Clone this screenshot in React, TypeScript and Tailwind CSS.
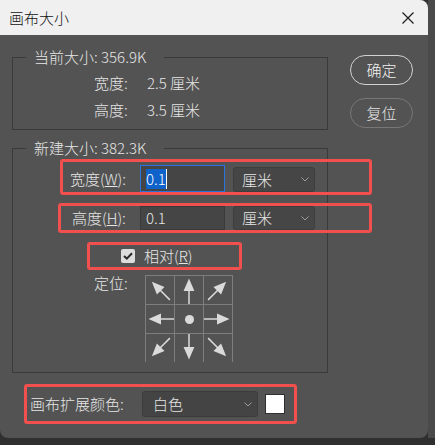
const ANCHORS: (number | null)[] = [-45, 0, 45, -90, null, 90, -135, 180, 135];

function Chevron() {
  return (
    <svg width="8" height="5" viewBox="0 0 8 5" className="shrink-0">
      <path d="M0.5 0.5 L4 4 L7.5 0.5" fill="none" stroke="#9c9c9c" strokeWidth="1" />
    </svg>
  );
}

function Arrow({ angle }: { angle: number }) {
  return (
    <svg width="28" height="28" viewBox="0 0 28 28">
      <g transform={`rotate(${angle} 14 14)`} fill="#dadada">
        <polygon points="14,2.5 8.6,15 19.4,15" />
        <rect x="13.25" y="14" width="1.5" height="14" />
      </g>
    </svg>
  );
}

function AnchorGrid() {
  return (
    <div className="grid grid-cols-[repeat(3,29px)] border-r border-[#7d7d7d]">
      {ANCHORS.map((a, i) => (
        <div key={i} className="flex h-[29px] w-[29px] items-center justify-center border-l border-t border-[#7d7d7d]">
          {a === null ? <span className="h-[9px] w-[9px] rounded-full bg-[#dadada]" /> : <Arrow angle={a} />}
        </div>
      ))}
    </div>
  );
}

export default function App() {
  return (
    <div className="flex h-[445px] w-[435px] bg-[#2f2f2f] font-['Noto_Sans_CJK_SC','Microsoft_YaHei',sans-serif] text-[15px] font-light leading-5 text-[#e6e6e6]">
      <div className="flex h-[438px] w-[428px] flex-col overflow-hidden rounded-b-[8px] rounded-tr-[8px] bg-[#535353]">
        {/* title bar */}
        <div className="flex h-[35px] shrink-0 items-center justify-between bg-[#f0f0f0] pl-[9px] pr-[14px] text-[#111]">
          <span>画布大小</span>
          <svg width="12" height="12" viewBox="0 0 12 12">
            <path d="M0.5 0.5 L11.5 11.5 M11.5 0.5 L0.5 11.5" stroke="#1c1c1c" strokeWidth="1.2" />
          </svg>
        </div>

        <div className="flex pt-3">
          <div className="flex w-[328px] flex-col pl-3">
            <fieldset className="min-w-0 border border-[#3a3a3a] pb-[6px]">
              <legend className="ml-[13px] pl-2 pr-[18px]">当前大小: 356.9K</legend>
              <div className="mt-[2px] pl-[81px]">
                <div className="flex h-[27px] items-center">
                  <span className="w-[53px]">宽度:</span>
                  <span>2.5 厘米</span>
                </div>
                <div className="flex h-[27px] items-center">
                  <span className="w-[53px]">高度:</span>
                  <span>3.5 厘米</span>
                </div>
              </div>
            </fieldset>

            <fieldset className="mt-2 min-w-0 border border-[#3a3a3a] pb-[10px]">
              <legend className="ml-[13px] pl-2 pr-[18px]">新建大小: 382.3K</legend>

              <div className="ml-[47px] mt-px flex h-[36px] w-[312px] items-end rounded-[3px] border-[3px] border-[#f24f4f] pl-[7px]">
                <span className="flex h-[27px] w-[70px] items-center">
                  宽度(<u>W</u>):
                </span>
                <div className="flex h-[27px] w-[85px] items-center border border-[#2a72dc] bg-[#454545] pl-[5px]">
                  <span className="bg-[#0f62c9] leading-[20px] text-white">0.1</span>
                  <span className="h-[20px] w-px bg-white" />
                </div>
                <div className="ml-2 flex h-[25px] w-[82px] items-center justify-between rounded-[3px] border border-[#3d3d3d] bg-[#464646] pl-2 pr-[5px]">
                  <span>厘米</span>
                  <Chevron />
                </div>
              </div>

              <div className="ml-[45px] mt-2 flex h-[30px] w-[314px] items-center rounded-[3px] border-[3px] border-[#f24f4f] pl-[11px]">
                <span className="w-[68px]">
                  高度(<u>H</u>):
                </span>
                <div className="flex h-[24px] w-[85px] items-center border border-[#3a3a3a] bg-[#454545] pl-[5px]">
                  <span>0.1</span>
                </div>
                <div className="ml-2 flex h-[24px] w-[82px] items-center justify-between rounded-[3px] border border-[#3d3d3d] bg-[#464646] pl-2 pr-[5px]">
                  <span>厘米</span>
                  <Chevron />
                </div>
              </div>

              <div className="ml-[74px] mt-[9px] flex h-[28px] w-[155px] items-center rounded-[3px] border-[3px] border-[#f24f4f] pl-[31px]">
                <span className="flex h-[14px] w-[14px] items-center justify-center rounded-[2px] bg-[#dcdcdc]">
                  <svg width="10" height="8" viewBox="0 0 10 8">
                    <path d="M1 4 L3.8 6.6 L9 1.2" fill="none" stroke="#2a2a2a" strokeWidth="2" />
                  </svg>
                </span>
                <span className="ml-[9px]">
                  相对(<u>R</u>)
                </span>
              </div>

              <div className="ml-[81px] mt-[5px] flex items-start">
                <span className="w-[51px] leading-4">定位:</span>
                <AnchorGrid />
              </div>
            </fieldset>

            <div className="ml-3 mt-[11px] flex h-[40px] w-[273px] items-center rounded-[3px] border-[3px] border-[#f24f4f] pl-[3px]">
              <span className="w-[112px]">画布扩展颜色:</span>
              <div className="flex h-[26px] w-[116px] items-center justify-between rounded-[3px] border border-[#3b3b3b] bg-[#444444] pl-[10px] pr-[5px]">
                <span>白色</span>
                <Chevron />
              </div>
              <span className="ml-[7px] h-[20px] w-[20px] border border-[#303030] bg-white" />
            </div>
          </div>

          <div className="ml-[22px] mt-2 flex flex-col gap-[13px]">
            <button type="button" className="h-[30px] w-[63px] rounded-full border-[1.5px] border-[#d2d2d2] text-[#f2f2f2]">
              确定
            </button>
            <button type="button" className="h-[30px] w-[63px] rounded-full border-[1.5px] border-[#777777] text-[#e3e3e3]">
              复位
            </button>
          </div>
        </div>
      </div>
      <div className="h-[438px] flex-1 bg-[#4a4a4a]" />
    </div>
  );
}
